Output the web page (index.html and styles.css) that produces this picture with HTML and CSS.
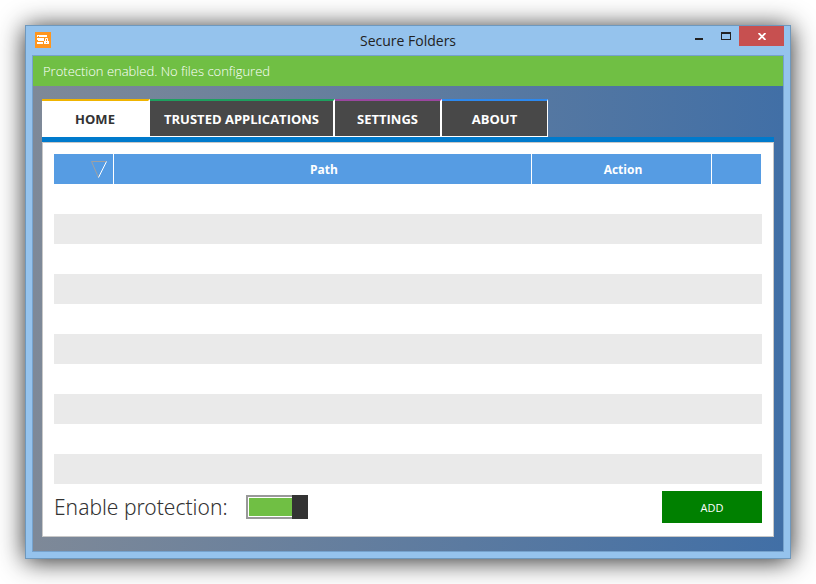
FILE: index.html
```html
<!DOCTYPE html>
<html lang="en">
<head>
  <meta charset="UTF-8">
  <title>Secure Folders</title>
  <link rel="stylesheet" href="styles.css">
</head>
<body>

  <div class="window">
    <header class="titlebar">
      <svg class="app-icon" width="16" height="16" viewBox="0 0 16 16" aria-hidden="true">
        <rect width="16" height="16" fill="#ff961e"/>
        <path fill="#fff" d="M2 3h10v2H2zM2 6h7v2H2zM3 8h6v1H3zM2 10h6v2H2z"/>
        <path fill="#ff961e" d="M3 4h1v1H3z"/>
        <path fill="none" stroke="#fff" d="M10.500 9V6.500h2V9"/>
        <path fill="#fff" d="M9 9h5v3H9z"/>
        <path fill="#ff961e" d="M11 10h1v1h-1z"/>
      </svg>
      <h1 class="title">Secure Folders</h1>
      <div class="window-buttons">
        <button class="window-btn" aria-label="Minimize">
          <svg width="8" height="12" viewBox="0 0 8 12"><path fill="#222" d="M0 8h8v2H0z"/></svg>
        </button>
        <button class="window-btn" aria-label="Maximize">
          <svg width="10" height="8" viewBox="0 0 10 8"><path fill="#222" fill-rule="evenodd" d="M0 0h10v8H0zM1 2v5h8V2z"/></svg>
        </button>
        <button class="window-btn close" aria-label="Close">
          <svg width="8" height="7" viewBox="0 0 8 7"><path fill="none" stroke="#fff" stroke-width="1.800" d="M.6 0l6.800 7M7.400 0L.6 7"/></svg>
        </button>
      </div>
    </header>

    <main class="client">
      <p class="status">Protection enabled. No files configured</p>

      <div class="content">
        <nav class="tabs">
          <a class="tab home active" href="#home">HOME</a>
          <a class="tab trusted" href="#trusted">TRUSTED APPLICATIONS</a>
          <a class="tab settings" href="#settings">SETTINGS</a>
          <a class="tab about" href="#about">ABOUT</a>
        </nav>

        <section class="panel" id="home">
          <table class="files">
            <colgroup>
              <col class="col-mark">
              <col>
              <col class="col-action">
              <col class="col-end">
            </colgroup>
            <thead>
              <tr>
                <th class="sort">
                  <svg width="16" height="17" viewBox="0 0 16 17" aria-hidden="true">
                    <path fill="none" stroke="#a0a0a0" d="M15 .5H.5l7 16"/>
                    <path fill="none" stroke="#fff" d="M15.500 .5l-8 16"/>
                  </svg>
                </th>
                <th>Path</th>
                <th>Action</th>
                <th></th>
              </tr>
            </thead>
            <tbody>
              <tr><td></td><td></td><td></td><td></td></tr>
              <tr><td></td><td></td><td></td><td></td></tr>
              <tr><td></td><td></td><td></td><td></td></tr>
              <tr><td></td><td></td><td></td><td></td></tr>
              <tr><td></td><td></td><td></td><td></td></tr>
              <tr><td></td><td></td><td></td><td></td></tr>
              <tr><td></td><td></td><td></td><td></td></tr>
              <tr><td></td><td></td><td></td><td></td></tr>
              <tr><td></td><td></td><td></td><td></td></tr>
              <tr><td></td><td></td><td></td><td></td></tr>
            </tbody>
          </table>

          <div class="actions">
            <label class="protection" for="protection">Enable protection:</label>
            <input class="toggle" type="checkbox" id="protection" checked>
            <button class="add">ADD</button>
          </div>
        </section>
      </div>
    </main>
  </div>

</body>
</html>
```
FILE: styles.css
```css
* {
  box-sizing: border-box;
}

body {
  background-color: white;
  font-family: "Open Sans", "Noto Sans", sans-serif;
  display: flex;
  min-height: 100vh;
  margin: 0;
  padding: 25px;
}

button {
  border: none;
  cursor: pointer;
  font-family: inherit;
}

.window {
  flex: 1;
  display: flex;
  flex-direction: column;
  padding: 0 6px 6px;
  border: 1px solid #6e98bd;
  background-color: #95c3ed;
  box-shadow: 0 2px 24px rgba(0,0,0,0.85);
}

/* title bar */
.titlebar {
  display: grid;
  grid-template-columns: 1fr auto 1fr;
  height: 29px;
}

.app-icon {
  margin: 6px 3px;
}

.title {
  margin: 0;
  color: #222;
  font-size: 14px;
  font-weight: 400;
  line-height: 29px;
}

.window-buttons {
  display: flex;
  justify-content: flex-end;
}

.window-btn {
  display: flex;
  justify-content: center;
  align-items: center;
  width: 27px;
  height: 20px;
  padding: 0;
  background: none;
}

.window-btn.close {
  width: 45px;
  background-color: #c75050;
}

/* client area */
.client {
  flex: 1;
  display: flex;
  flex-direction: column;
  border: 1px solid #76a2cc;
  background: linear-gradient(to right, #7e8998, #416fa6);
}

.status {
  margin: 0;
  padding: 0 10px;
  background-color: #70bf44;
  color: white;
  font-size: 13px;
  font-weight: 300;
  line-height: 30px;
}

.content {
  flex: 1;
  display: flex;
  flex-direction: column;
  padding: 13px 9px 14px;
}

.tabs {
  display: flex;
  align-items: flex-start;
}

.tab {
  min-width: 107px;
  height: 38px;
  padding: 0 14px;
  border: solid white;
  border-width: 2px 2px 1px 0;
  background-color: #484848;
  color: white;
  font-size: 13px;
  font-weight: 700;
  line-height: 36px;
  text-align: center;
  text-decoration: none;
}

.tab.active {
  min-width: 108px;
  background-color: white;
  color: #333;
}

.tab:last-child {
  min-width: 106px;
  border-right-width: 1px;
}

.tab.home {
  border-top-color: #f0b400;
}

.tab.trusted {
  border-top-color: #1ea05f;
}

.tab.settings {
  border-top-color: #9b479f;
}

.tab.about {
  border-top-color: #2d89ef;
}

.panel {
  flex: 1;
  padding: 11px;
  border: 1px solid #c8c8c8;
  background-color: white;
  box-shadow: 0 -5px #007acc;
  margin-top: 5px;
}

/* file list */
.files {
  width: 100%;
  border-collapse: collapse;
  table-layout: fixed;
}

.col-mark {
  width: 60px;
}

.col-action {
  width: 180px;
}

.col-end {
  width: 50px;
}

.files th,
.files td {
  height: 30px;
  padding: 0;
}

.files th {
  padding: 1px 0 0 2px;
  background-color: #569ce3;
  box-shadow: inset -1px 0 white;
  color: white;
  font-size: 12px;
  line-height: 20px;
}

.files .sort {
  padding-right: 7px;
  text-align: right;
}

.sort svg {
  display: block;
  margin-left: auto;
}

.files tbody tr:nth-child(even) {
  background-color: #eaeaea;
}

.actions {
  display: flex;
  align-items: center;
  gap: 18px;
  padding-top: 7px;
}

.protection {
  color: #333;
  font-family: "Noto Sans", "Open Sans", sans-serif;
  font-size: 21px;
  font-weight: 300;
  line-height: 30px;
}

.toggle {
  appearance: none;
  width: 62px;
  height: 24px;
  margin: 0;
  padding: 3px;
  background: linear-gradient(#a6a6a6, #a6a6a6) content-box;
  box-shadow: inset 0 0 0 2px #999;
  cursor: pointer;
}

.toggle::before {
  content: "";
  display: block;
  width: 16px;
  height: 24px;
  margin: -3px;
  background-color: #333;
}

.toggle:checked {
  background: linear-gradient(#70bf44, #70bf44) content-box;
}

.toggle:checked::before {
  margin-left: 43px;
}

.add {
  width: 100px;
  height: 32px;
  margin-left: auto;
  background-color: #008000;
  color: white;
  font-size: 11px;
}
```
